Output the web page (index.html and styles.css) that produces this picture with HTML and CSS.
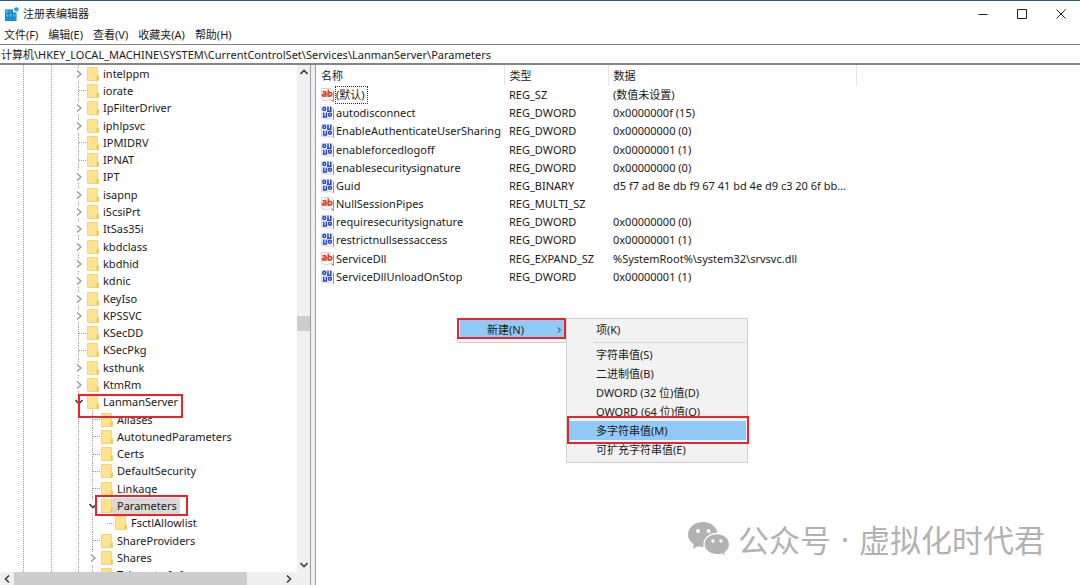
FILE: index.html
```html
<!DOCTYPE html>
<html lang="zh-CN">
<head>
<meta charset="utf-8">
<title>注册表编辑器</title>
<link rel="stylesheet" href="styles.css">
</head>
<body>
<svg class="defs" aria-hidden="true">
  <symbol id="folder" viewBox="0 0 12 14">
    <path d="M0.5 0.5H10.5V8.5H11.5V13.5H0.5Z" fill="#ffe48d" stroke="#f3d57e"/>
    <path d="M9.500 9h2v4.500H9.500z" fill="#f0c653"/>
  </symbol>
  <symbol id="closed" viewBox="0 0 8 8"><path d="M2 0.5L6 4L2 7.5" fill="none" stroke="#9a9a9a" stroke-width="1.4"/></symbol>
  <symbol id="next" viewBox="0 0 8 8"><path d="M2 0.5L6 4L2 7.5" fill="none" stroke="#333" stroke-width="1.3"/></symbol>
  <symbol id="open" viewBox="0 0 8 8"><path d="M0.5 2L4 5.5L7.5 2" fill="none" stroke="#404040" stroke-width="1.6"/></symbol>
  <symbol id="text-value" viewBox="0 0 13 14">
    <path d="M0.5 0.5H10L12.5 3V13.5L9 11.5L5 13L0.5 11Z" fill="#fff" stroke="#d4d4d4"/>
    <path d="M12.5 3V13.5M10 11.500L12.500 13.500" fill="none" stroke="#8e8e8e"/>
    <g fill="none" stroke="#d9482b" stroke-width="1.700"><path d="M1.600 4.200C3 3.300 5 3.500 5 5V8.800M5 6C2.500 5.700 1.300 6.400 1.600 7.400C2 8.600 4.200 8.300 5 7.100"/><path d="M7.300 1.500V8.800"/><ellipse cx="9" cy="6.200" rx="1.700" ry="1.900"/></g>
  </symbol>
  <symbol id="number-value" viewBox="0 0 13 14">
    <path d="M0.500 0.500H10L12.500 3V13.500L9 12.500L5 13.200L0.500 12Z" fill="#fff" stroke="#d4d4d4"/>
    <path d="M12.500 3V13.500" stroke="#8e8e8e"/>
    <g fill="none" stroke="#2646d8" stroke-width="1.600"><rect x="2" y="1.500" width="2.600" height="3" rx="1"/><path d="M7 0.700V5.200M9.800 0.700V5.200M2.700 6.500V11M5.400 6.500V11M6 5.200H10.600M1.800 11H6.200"/><rect x="7.700" y="7.300" width="2.600" height="3" rx="1"/></g>
  </symbol>
</svg>

<div class="window">
  <header class="titlebar">
    <svg class="app-icon" viewBox="0 0 14 14" aria-hidden="true">
      <path d="M0 2.500H8V5.500H11.500V14H0Z" fill="#1276b8"/>
      <path d="M0.500 3H3.500V6H0.500ZM0.500 6.800H3.500V9.800H0.500ZM4.200 6.800H7.300V9.800H4.200ZM8 6.800H11V9.800H8Z" fill="#35b5ee"/>
      <path d="M4.200 3H7.300V6H4.200ZM0.500 10.500H3.500V13.500H0.500ZM4.200 10.500H7.300V13.500H4.200ZM8 10.500H11V13.500H8Z" fill="#1c9bdc"/>
      <path d="M9 1.200L11.500 0L13.800 1.500L13.300 3.800L11 4.700L9.200 3.500Z" fill="#2aa5e3"/>
    </svg>
    <h1 class="title">注册表编辑器</h1>
    <div class="window-buttons">
      <button class="window-button" aria-label="最小化"><svg viewBox="0 0 10 10"><path d="M0.500 5.500H9.500"/></svg></button>
      <button class="window-button" aria-label="最大化"><svg viewBox="0 0 10 10"><path d="M0.500 0.500H9.500V9.500H0.500Z"/></svg></button>
      <button class="window-button" aria-label="关闭"><svg viewBox="0 0 10 10"><path d="M0.500 0.500L9.500 9.500M9.500 0.500L0.500 9.500"/></svg></button>
    </div>
  </header>
  <nav class="menubar">
    <button>文件(F)</button><button>编辑(E)</button><button>查看(V)</button><button>收藏夹(A)</button><button>帮助(H)</button>
  </nav>
  <input class="address" aria-label="地址" value="计算机\HKEY_LOCAL_MACHINE\SYSTEM\CurrentControlSet\Services\LanmanServer\Parameters">

  <main class="panes">
    <section class="tree-pane">
      <div class="tree-view">
        <ul class="tree">
          <li><button class="twist" aria-label="展开"><svg><use href="#closed"/></svg></button><svg class="folder"><use href="#folder"/></svg><span>intelppm</span></li>
          <li class="leaf"><i class="twist"></i><svg class="folder"><use href="#folder"/></svg><span>iorate</span></li>
          <li><button class="twist" aria-label="展开"><svg><use href="#closed"/></svg></button><svg class="folder"><use href="#folder"/></svg><span>IpFilterDriver</span></li>
          <li><button class="twist" aria-label="展开"><svg><use href="#closed"/></svg></button><svg class="folder"><use href="#folder"/></svg><span>iphlpsvc</span></li>
          <li class="leaf"><i class="twist"></i><svg class="folder"><use href="#folder"/></svg><span>IPMIDRV</span></li>
          <li class="leaf"><i class="twist"></i><svg class="folder"><use href="#folder"/></svg><span>IPNAT</span></li>
          <li><button class="twist" aria-label="展开"><svg><use href="#closed"/></svg></button><svg class="folder"><use href="#folder"/></svg><span>IPT</span></li>
          <li><button class="twist" aria-label="展开"><svg><use href="#closed"/></svg></button><svg class="folder"><use href="#folder"/></svg><span>isapnp</span></li>
          <li><button class="twist" aria-label="展开"><svg><use href="#closed"/></svg></button><svg class="folder"><use href="#folder"/></svg><span>iScsiPrt</span></li>
          <li><button class="twist" aria-label="展开"><svg><use href="#closed"/></svg></button><svg class="folder"><use href="#folder"/></svg><span>ItSas35i</span></li>
          <li><button class="twist" aria-label="展开"><svg><use href="#closed"/></svg></button><svg class="folder"><use href="#folder"/></svg><span>kbdclass</span></li>
          <li><button class="twist" aria-label="展开"><svg><use href="#closed"/></svg></button><svg class="folder"><use href="#folder"/></svg><span>kbdhid</span></li>
          <li><button class="twist" aria-label="展开"><svg><use href="#closed"/></svg></button><svg class="folder"><use href="#folder"/></svg><span>kdnic</span></li>
          <li><button class="twist" aria-label="展开"><svg><use href="#closed"/></svg></button><svg class="folder"><use href="#folder"/></svg><span>KeyIso</span></li>
          <li><button class="twist" aria-label="展开"><svg><use href="#closed"/></svg></button><svg class="folder"><use href="#folder"/></svg><span>KPSSVC</span></li>
          <li class="leaf"><i class="twist"></i><svg class="folder"><use href="#folder"/></svg><span>KSecDD</span></li>
          <li class="leaf"><i class="twist"></i><svg class="folder"><use href="#folder"/></svg><span>KSecPkg</span></li>
          <li><button class="twist" aria-label="展开"><svg><use href="#closed"/></svg></button><svg class="folder"><use href="#folder"/></svg><span>ksthunk</span></li>
          <li><button class="twist" aria-label="展开"><svg><use href="#closed"/></svg></button><svg class="folder"><use href="#folder"/></svg><span>KtmRm</span></li>
          <li><button class="twist" aria-label="折叠"><svg><use href="#open"/></svg></button><svg class="folder"><use href="#folder"/></svg><span>LanmanServer</span><i class="mark mark-server"></i></li>
          <li class="leaf level-2"><i class="twist"></i><svg class="folder"><use href="#folder"/></svg><span>Aliases</span></li>
          <li class="leaf level-2"><i class="twist"></i><svg class="folder"><use href="#folder"/></svg><span>AutotunedParameters</span></li>
          <li class="leaf level-2"><i class="twist"></i><svg class="folder"><use href="#folder"/></svg><span>Certs</span></li>
          <li class="leaf level-2"><i class="twist"></i><svg class="folder"><use href="#folder"/></svg><span>DefaultSecurity</span></li>
          <li class="leaf level-2"><i class="twist"></i><svg class="folder"><use href="#folder"/></svg><span>Linkage</span></li>
          <li class="level-2 selected"><button class="twist" aria-label="折叠"><svg><use href="#open"/></svg></button><svg class="folder"><use href="#folder"/></svg><span>Parameters</span><i class="mark mark-parameters"></i></li>
          <li class="leaf level-3"><i class="twist"></i><svg class="folder"><use href="#folder"/></svg><span>FsctlAllowlist</span></li>
          <li class="leaf level-2"><i class="twist"></i><svg class="folder"><use href="#folder"/></svg><span>ShareProviders</span></li>
          <li class="level-2"><button class="twist" aria-label="展开"><svg><use href="#closed"/></svg></button><svg class="folder"><use href="#folder"/></svg><span>Shares</span></li>
          <li class="leaf level-2"><i class="twist"></i><svg class="folder"><use href="#folder"/></svg><span>TelemetryInfo</span></li>
        </ul>
        <div class="scroll-y">
          <button class="arrow" aria-label="向上"><svg class="up" viewBox="0 0 8 8"><use href="#open"/></svg></button>
          <div class="track-y"><div class="thumb-y"></div></div>
          <button class="arrow" aria-label="向下"><svg viewBox="0 0 8 8"><use href="#open"/></svg></button>
        </div>
      </div>
      <div class="scroll-x">
        <button class="arrow" aria-label="向左"><svg class="left" viewBox="0 0 8 8"><use href="#open"/></svg></button>
        <div class="thumb-x"></div>
        <button class="arrow" aria-label="向右"><svg class="right" viewBox="0 0 8 8"><use href="#open"/></svg></button>
      </div>
    </section>
    <div class="splitter"></div>
    <section class="value-pane">
      <table class="values">
        <thead><tr><th class="col-name">名称</th><th class="col-type">类型</th><th class="col-data">数据</th></tr></thead>
        <tbody>
          <tr><td><div class="name"><svg><use href="#text-value"/></svg><span class="focused">(默认)</span></div></td><td>REG_SZ</td><td>(数值未设置)</td></tr>
          <tr><td><div class="name"><svg><use href="#number-value"/></svg><span>autodisconnect</span></div></td><td>REG_DWORD</td><td>0x0000000f (15)</td></tr>
          <tr><td><div class="name"><svg><use href="#number-value"/></svg><span>EnableAuthenticateUserSharing</span></div></td><td>REG_DWORD</td><td>0x00000000 (0)</td></tr>
          <tr><td><div class="name"><svg><use href="#number-value"/></svg><span>enableforcedlogoff</span></div></td><td>REG_DWORD</td><td>0x00000001 (1)</td></tr>
          <tr><td><div class="name"><svg><use href="#number-value"/></svg><span>enablesecuritysignature</span></div></td><td>REG_DWORD</td><td>0x00000000 (0)</td></tr>
          <tr><td><div class="name"><svg><use href="#number-value"/></svg><span>Guid</span></div></td><td>REG_BINARY</td><td>d5 f7 ad 8e db f9 67 41 bd 4e d9 c3 20 6f bb...</td></tr>
          <tr><td><div class="name"><svg><use href="#text-value"/></svg><span>NullSessionPipes</span></div></td><td>REG_MULTI_SZ</td><td></td></tr>
          <tr><td><div class="name"><svg><use href="#number-value"/></svg><span>requiresecuritysignature</span></div></td><td>REG_DWORD</td><td>0x00000000 (0)</td></tr>
          <tr><td><div class="name"><svg><use href="#number-value"/></svg><span>restrictnullsessaccess</span></div></td><td>REG_DWORD</td><td>0x00000001 (1)</td></tr>
          <tr><td><div class="name"><svg><use href="#text-value"/></svg><span>ServiceDll</span></div></td><td>REG_EXPAND_SZ</td><td>%SystemRoot%\system32\srvsvc.dll</td></tr>
          <tr><td><div class="name"><svg><use href="#number-value"/></svg><span>ServiceDllUnloadOnStop</span></div></td><td>REG_DWORD</td><td>0x00000001 (1)</td></tr>
        </tbody>
      </table>

      <div class="context-menu">
        <button class="menu-item new-item active">新建(N)<svg><use href="#next"/></svg></button>
        <i class="mark mark-new"></i>
        <div class="submenu">
          <button class="menu-item">项(K)</button>
          <hr>
          <button class="menu-item">字符串值(S)</button>
          <button class="menu-item">二进制值(B)</button>
          <button class="menu-item">DWORD (32 位)值(D)</button>
          <button class="menu-item">QWORD (64 位)值(Q)</button>
          <div class="marked"><button class="menu-item active">多字符串值(M)</button><i class="mark mark-multi"></i></div>
          <button class="menu-item">可扩充字符串值(E)</button>
        </div>
      </div>

      <div class="watermark">
        <svg viewBox="0 0 42 35" aria-hidden="true">
          <path d="M15 0C6.700 0 0 5.500 0 12.500C0 16.500 2.200 20 5.700 22.300L5 27L10 24.200C11.600 24.700 13.300 25 15 25C23.300 25 29.500 19.500 29.500 12.500C29.500 5.500 23.300 0 15 0Z" fill="#b2b2b2"/>
          <path d="M29 11.500C21.500 11.500 16 16.500 16 22.200C16 28 21.500 32.700 29 32.700C30.700 32.700 32.200 32.500 33.600 32L37.500 34.500L37 30.600C39.700 28.600 41.500 25.700 41.500 22.200C41.500 16.500 36.200 11.500 29 11.500Z" fill="#b2b2b2" stroke="#fff" stroke-width="1.300"/>
          <g fill="#fff"><circle cx="10" cy="9" r="2"/><circle cx="20.500" cy="9" r="2"/><circle cx="25" cy="19" r="1.700"/><circle cx="33" cy="19" r="1.700"/></g>
        </svg>
        <span>公众号</span><span class="dot">·</span><span>虚拟化时代君</span>
      </div>
    </section>
  </main>
</div>
</body>
</html>
```
FILE: styles.css
```css
* { box-sizing: border-box; }
body, h1, ul { margin: 0; padding: 0; }
body {
  background: #fff;
  color: #1a1a1a;
  font: 11px/16px "Noto Sans", "Noto Sans CJK SC", sans-serif;
}
button, input { font: inherit; color: inherit; border: 0; background: none; padding: 0; margin: 0; }
svg { display: block; flex: none; }
.defs { position: absolute; width: 0; height: 0; }

.window { display: flex; flex-direction: column; height: 100vh; border-top: 1px solid #34587b; }
.titlebar { display: flex; align-items: center; height: 25px; padding-left: 5px; }
.app-icon { width: 14px; height: 14px; }
.title { margin-left: 4px; font-size: 11px; line-height: 16px; font-weight: 400; }
.window-buttons { display: flex; margin-left: auto; }
.window-button { width: 39px; height: 24px; display: grid; place-items: center; }
.window-button svg { width: 10px; height: 10px; fill: none; stroke: #222; }
.menubar { display: flex; gap: 10px; height: 18px; padding-left: 4px; align-items: center; }
.address { width: 100%; height: 21px; padding: 0 1px 1px; border: solid #858585; border-width: 1px 0 2px; outline: 0; }

.panes { display: flex; flex: 1; min-height: 0; }
.tree-pane { width: 310px; flex: none; display: flex; flex-direction: column; }
.tree-view { display: flex; flex: 1; min-height: 0; overflow: hidden; }
.tree {
  --dots: repeating-linear-gradient(#999 0 1px, transparent 1px 2px);
  flex: 1;
  height: calc(100% + 12px);
  display: flex;
  flex-direction: column;
  list-style: none;
  background: var(--dots) 23px 0 / 1px 100% no-repeat, var(--dots) 51px 0 / 1px 100% no-repeat, var(--dots) 78px 0 / 1px 100% no-repeat;
}
.tree li { position: relative; flex: 1; min-height: 0; display: flex; align-items: center; padding-left: 74px; }
.tree .level-2 { padding-left: 88px; background: var(--dots) 92px 0 / 1px 100% no-repeat; }
.tree .level-3 { padding-left: 102px; background: var(--dots) 92px 0 / 1px 100% no-repeat; }
.twist { width: 10px; height: 12px; margin-right: 3px; display: grid; place-items: center; background: #fff; }
.twist svg { width: 8px; height: 8px; }
.leaf .twist { width: 8px; height: 1px; margin-left: 5px; margin-right: 0; background: repeating-linear-gradient(90deg, #999 0 1px, transparent 1px 2px); }
.folder { width: 12px; height: 14px; }
.tree span { padding: 0 3px 0 4px; }
.selected .folder, .selected span { background: #d9d9d9; }

.scroll-y { width: 13px; display: flex; flex-direction: column; background: #f0f0f0; }
.arrow { width: 14px; height: 14px; display: grid; place-items: center; flex: none; }
.arrow svg { width: 8px; height: 8px; }
.up { transform: rotate(180deg); }
.left { transform: rotate(90deg); }
.right { transform: rotate(-90deg); }
.track-y { flex: 1; padding-top: 237px; }
.thumb-y { height: 15px; background: #cdcdcd; }
.scroll-x { display: flex; align-items: center; height: 13px; padding-right: 14px; background: #f0f0f0; }
.thumb-x { width: 233px; height: 13px; background: #cdcdcd; margin-right: auto; }
.splitter { width: 6px; flex: none; border: solid #9a9da3; border-width: 0 1px; background: #f0f0f0; }

.value-pane { position: relative; flex: 1; min-width: 0; }
.values { width: 541px; height: 221px; border-collapse: collapse; table-layout: fixed; white-space: nowrap; }
.values th { height: 21px; padding: 0 5px; border-right: 1px solid #e5e5e5; text-align: left; font-weight: 400; }
.values td { padding: 0 5px; }
.col-name { width: 188px; }
.col-type { width: 104px; }
.name { display: flex; align-items: center; gap: 2px; }
.name svg { width: 13px; height: 14px; }
.focused { outline: 1px dotted #333; padding-right: 2px; }

.context-menu { position: absolute; left: 141px; top: 253px; width: 110px; padding: 1px 2px 3px; border: 1px solid #d0d0d0; background: #f2f2f2; }
.menu-item { display: flex; align-items: center; width: 100%; height: 19px; padding-left: 27px; white-space: nowrap; }
.new-item { justify-content: space-between; padding-right: 2px; }
.new-item svg { width: 6px; height: 6px; }
.active { background: #91c9f7; }
.submenu { position: absolute; left: 108px; top: -1px; width: 182px; padding: 1px 1px 3px 2px; border: 1px solid #d0d0d0; background: #f2f2f2; }
.submenu hr { margin: 3px 0 2px 24px; border: 0; border-top: 1px solid #d8d8d8; }
.marked { position: relative; }
.mark { position: absolute; border: 2px solid #e8252d; pointer-events: none; z-index: 1; }
.mark-server { left: 78px; top: 0; width: 105px; height: 24px; }
.mark-parameters { left: 95px; top: -2px; width: 93px; height: 21px; }
.mark-new { left: -1px; top: -1px; width: 109px; height: 21px; }
.mark-multi { left: -2px; top: -5px; width: 182px; height: 28px; }

.watermark { position: absolute; right: 35px; bottom: 28px; display: flex; align-items: center; color: #b2b2b2; font: 400 31px/36px "Noto Sans CJK SC", sans-serif; }
.watermark svg { width: 42px; height: 35px; margin-right: 8px; }
.dot { width: 28px; text-align: center; font-family: "Noto Sans", sans-serif; }
```
